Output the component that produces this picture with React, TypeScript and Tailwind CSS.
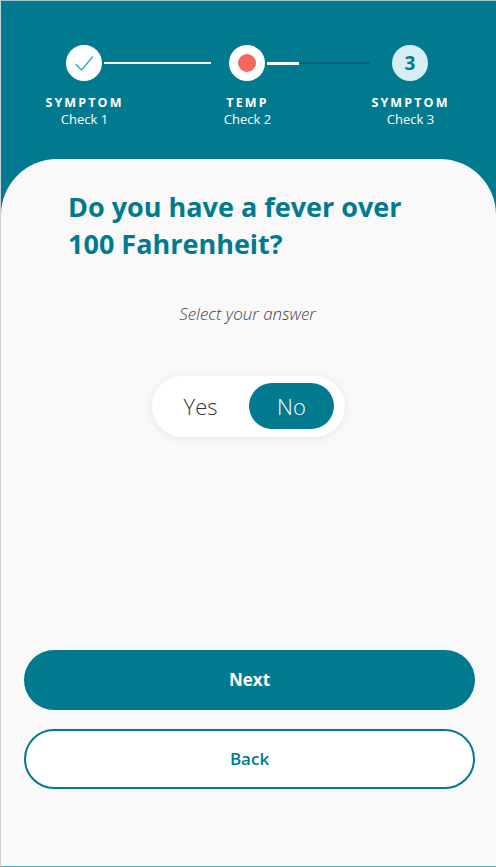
const steps = [
  { title: 'SYMPTOM', sub: 'Check 1' },
  { title: 'TEMP', sub: 'Check 2' },
  { title: 'SYMPTOM', sub: 'Check 3' },
];

const App = () => {
  return (
    <div className="h-[867px] w-full flex flex-col bg-[#017a8f] border-t border-l border-b border-t-[#a9c3c9] border-l-[#c9d2d4] border-b-[#3fb0c2] font-['Open_Sans',sans-serif]">
      {/* Stepper */}
      <div className="h-[158px] shrink-0">
        <div className="flex items-center pt-[44px] pl-[65px]">
          <div className="w-9 h-9 rounded-full bg-white flex items-center justify-center">
            <svg width="22" height="22" viewBox="0 0 22 22" fill="none">
              <path d="M3 12.5 L8.5 18 L19.5 5" stroke="#2db8cf" strokeWidth="1.6" strokeLinecap="round" strokeLinejoin="round" />
            </svg>
          </div>
          <div className="ml-[2px] mr-[18px] w-[107px] h-[2px] bg-white" />
          <div className="w-9 h-9 rounded-full bg-white flex items-center justify-center">
            <div className="w-[18px] h-[18px] rounded-full bg-[#f4675c]" />
          </div>
          <div className="ml-[2px] mr-[22px] w-[103px] h-[2px] flex">
            <div className="w-[32px] h-[3px] -mt-[0.5px] bg-white" />
            <div className="flex-1 h-[2px] bg-[#08627a]" />
          </div>
          <div className="w-9 h-9 rounded-full bg-[#d6edf2] flex items-center justify-center text-[19px] font-bold text-[#017a8f]">
            3
          </div>
        </div>
        <div className="flex pl-[2px] mt-[14px]">
          {steps.map((s, i) => (
            <div key={i} className="w-[163px] flex flex-col items-center text-white">
              <span className="text-[12.5px] font-bold tracking-[0.17em] leading-[16px]">{s.title}</span>
              <span className="text-[13px] leading-[16px]">{s.sub}</span>
            </div>
          ))}
        </div>
      </div>

      {/* Card */}
      <div className="flex-1 bg-[#f9f9f9] rounded-t-[56px] flex flex-col">
        <h1 className="pl-[67px] pr-[60px] pt-[29px] text-[27px] leading-[37px] font-bold text-[#017a8f]">
          Do you have a fever over 100 Fahrenheit?
        </h1>
        <p className="mt-[39px] text-center text-[17px] italic font-light text-[#444] pr-[2px]">
          Select your answer
        </p>
        <div className="mt-[49px] flex justify-center">
          <div className="w-[193px] h-[61px] rounded-full bg-white shadow-[0_1px_10px_rgba(0,0,0,0.08)] flex items-center pr-[11px]">
            <span className="flex-1 text-center text-[22px] font-light text-[#333]">Yes</span>
            <span className="w-[85px] h-[46px] rounded-full bg-[#017a8f] text-white text-[22px] font-light flex items-center justify-center">
              No
            </span>
          </div>
        </div>

        <div className="flex-1" />

        <div className="px-[23px] pr-[21px] pb-[77px] flex flex-col gap-[19px]">
          <button className="h-[60px] rounded-full bg-[#017a8f] text-white text-[17px] font-bold">Next</button>
          <button className="h-[60px] rounded-full bg-white border-2 border-[#017a8f] text-[#017a8f] text-[17px] font-semibold">
            Back
          </button>
        </div>
      </div>
    </div>
  );
};

export default App;
